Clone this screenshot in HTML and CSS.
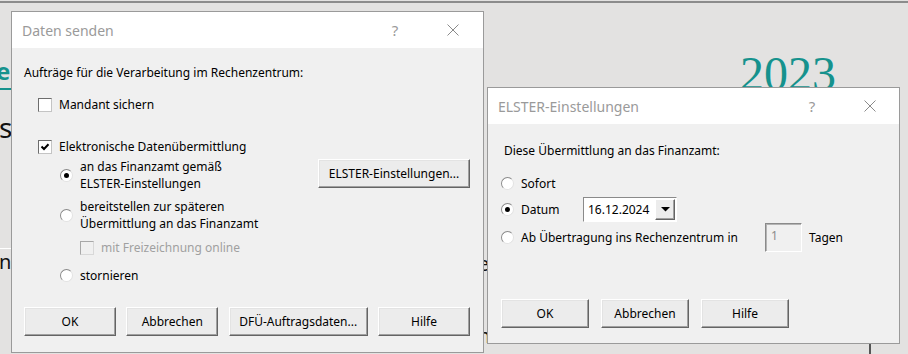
FILE: index.html
```html
<!DOCTYPE html>
<html lang="de">
<head>
<meta charset="utf-8">
<title>Daten senden</title>
<link rel="stylesheet" href="styles.css">
</head>
<body>
<div class="screen">
  <div class="topline"></div>
  <div class="bg-e">e</div>
  <div class="bg-dash"></div>
  <div class="bg-sle">sle</div>
  <div class="bg-rule"></div>
  <div class="bg-n">n</div>
  <div class="bg-year">2023</div>
  <div class="bg-mid-e">e</div>
  <div class="bg-mid-n">n</div>
  <div class="bg-vline"></div>

  <section class="dlg dlg-send">
    <header class="titlebar titlebar-send">
      <span class="title">Daten senden</span>
      <span class="cap-help">?</span>
      <span class="cap-close"><svg width="12" height="12" viewBox="0 0 12 12"><path d="M0.5 0.5L11.5 11.5M11.5 0.5L0.5 11.5" stroke="#8a8a8a" stroke-width="1" fill="none"/></svg></span>
    </header>
    <div class="body-send">
      <p class="heading">Aufträge für die Verarbeitung im Rechenzentrum:</p>
      <label class="check row-mandant"><span class="box"></span>Mandant sichern</label>
      <label class="check row-edu"><span class="box"><svg width="12" height="12" viewBox="0 0 12 12"><path d="M2.5 5.5L5 8L9.5 3.2" stroke="#000" stroke-width="2" fill="none"/></svg></span>Elektronische Datenübermittlung</label>
      <div class="opt-row row-finanzamt">
        <label class="radio"><span class="dot on"></span><span>an das Finanzamt gemäß<br>ELSTER-Einstellungen</span></label>
        <button class="btn btn-elster">ELSTER-Einstellungen...</button>
      </div>
      <label class="radio row-bereit"><span class="dot"></span><span>bereitstellen zur späteren<br>Übermittlung an das Finanzamt</span></label>
      <label class="check disabled row-frei"><span class="box"></span>mit Freizeichnung online</label>
      <label class="radio row-storno"><span class="dot"></span><span>stornieren</span></label>
      <div class="btn-row-send">
        <button class="btn btn-std">OK</button>
        <button class="btn btn-std">Abbrechen</button>
        <button class="btn btn-dfue">DFÜ-Auftragsdaten...</button>
        <button class="btn btn-std">Hilfe</button>
      </div>
    </div>
  </section>

  <section class="dlg dlg-elster">
    <header class="titlebar titlebar-elster">
      <span class="title">ELSTER-Einstellungen</span>
      <span class="cap-help">?</span>
      <span class="cap-close"><svg width="12" height="12" viewBox="0 0 12 12"><path d="M0.5 0.5L11.5 11.5M11.5 0.5L0.5 11.5" stroke="#8a8a8a" stroke-width="1" fill="none"/></svg></span>
    </header>
    <div class="body-elster">
      <p class="heading elster-heading">Diese Übermittlung an das Finanzamt:</p>
      <label class="radio row-sofort"><span class="dot"></span><span>Sofort</span></label>
      <div class="radio row-datum"><span class="dot on"></span><span class="lbl-datum">Datum</span>
        <div class="combo"><span class="combo-val">16.12.2024</span><span class="combo-btn"><svg width="9" height="5" viewBox="0 0 9 5"><path d="M0 0H9L4.5 4.5Z" fill="#000"/></svg></span></div>
      </div>
      <div class="radio row-ab"><span class="dot"></span><span class="lbl-ab">Ab Übertragung ins Rechenzentrum in</span><span class="num">1</span><span class="lbl-tagen">Tagen</span></div>
      <div class="btn-row-elster">
        <button class="btn btn-small">OK</button>
        <button class="btn btn-small">Abbrechen</button>
        <button class="btn btn-small">Hilfe</button>
      </div>
    </div>
  </section>
</div>
</body>
</html>
```
FILE: styles.css
```css
* { box-sizing: border-box; }
html, body { margin: 0; padding: 0; }
body {
  width: 908px; height: 354px; overflow: hidden;
  font-family: "Noto Sans", "Open Sans", sans-serif;
  font-size: 12px; color: #000; background: #e3e2e1;
}
.screen { position: relative; width: 908px; height: 354px; overflow: hidden; background: #e3e2e1; }

/* background canvas fragments */
.topline { position: absolute; left: 0; top: 1px; width: 100%; height: 2px; background: #8c8c8c; }
.bg-e { position: absolute; left: -4px; top: 59px; font-size: 24px; line-height: 1; font-weight: 700; color: #16928d; }
.bg-dash { position: absolute; left: 0; top: 88px; width: 12px; height: 2px; border-top: 2px dashed #16928d; }
.bg-sle { position: absolute; left: -1px; top: 113px; font-size: 28px; line-height: 1; color: #111; }
.bg-rule { position: absolute; left: 0; top: 248px; width: 12px; height: 1px; background: #fff; }
.bg-n { position: absolute; left: -1px; top: 252px; font-size: 20px; line-height: 1; color: #111; }
.bg-year { position: absolute; left: 740px; top: 50px; font-family: "Liberation Serif", serif; font-size: 48px; line-height: 1; color: #16928d; }
.bg-mid-e { position: absolute; left: 478px; top: 254px; font-size: 20px; line-height: 1; color: #111; }
.bg-mid-n { position: absolute; left: 478px; top: 326px; font-size: 20px; line-height: 1; color: #111; }
.bg-vline { position: absolute; left: 869px; top: 340px; width: 2px; height: 14px; background: #555; }

/* windows */
.dlg { position: absolute; display: flex; flex-direction: column; background: #f0f0f0; border: 1px solid #9a9a9a; }
.dlg-send { left: 11px; top: 11px; width: 473px; height: 342px; }
.dlg-elster { left: 487px; top: 87px; width: 413px; height: 257px; }

.titlebar { display: flex; align-items: center; height: 36px; background: #fff; padding-left: 10px; flex: none; }
.titlebar-send { padding-right: 7px; }
.titlebar-elster { padding-right: 6px; }
.title { flex: 1; font-size: 14px; color: #9a9a9a; }
.cap-help { width: 46px; text-align: center; font-size: 15px; color: #9a9a9a; margin-right: 12px; }
.cap-close { width: 46px; display: flex; justify-content: center; }

.heading { margin: 0; height: 17px; line-height: 17px; white-space: nowrap; }

.check { display: flex; align-items: center; height: 17px; line-height: 17px; white-space: nowrap; }
.box {
  width: 14px; height: 14px; flex: none; margin-right: 7px;
  display: flex; align-items: center; justify-content: center;
  background: #fff; border: 1px solid; border-color: #6d6d6d #c4c4c4 #c4c4c4 #6d6d6d;
}
.check.disabled { color: #a0a0a0; }
.check.disabled .box { background: #f0f0f0; border-color: #a8a8a8 #d8d8d8 #d8d8d8 #a8a8a8; }

.radio { display: flex; align-items: center; line-height: 17px; white-space: nowrap; }
.dot {
  position: relative; flex: none; width: 13px; height: 13px; margin-right: 7px;
  border-radius: 50%; background: #fff;
  border: 1px solid; border-color: #8a8a8a #e2e2e2 #e2e2e2 #8a8a8a;
}
.dot.on::after {
  content: ""; position: absolute; left: 3px; top: 3px; width: 5px; height: 5px;
  border-radius: 50%; background: #000;
}

.btn {
  height: 29px; padding: 0; font-family: inherit; font-size: 12px; color: #000;
  background: #ececec; border: 1px solid; border-color: #fff #646464 #646464 #fff;
  box-shadow: inset -1px -1px 0 #a0a0a0, inset 1px 1px 0 #e3e3e3;
}

/* Daten senden body */
.body-send { padding: 16px 13px 0 12px; display: flex; flex-direction: column; }
.row-mandant { margin: 15px 0 0 14px; }
.row-edu { margin: 25px 0 0 14px; }
.opt-row { display: flex; justify-content: space-between; align-items: flex-start; }
.row-finanzamt { margin: 3px 0 0 36px; }
.row-finanzamt .radio { height: 34px; }
.btn-elster { width: 152px; margin-top: 1px; }
.row-bereit { margin: 6px 0 0 36px; height: 34px; }
.row-frei { margin: 7px 0 0 56px; }
.row-storno { margin: 11px 0 0 36px; height: 17px; }
.btn-row-send { display: flex; justify-content: space-between; margin-top: 23px; }
.btn-std { width: 92px; }
.btn-dfue { width: 139px; }

/* ELSTER body */
.body-elster { padding: 18px 12px 0 13px; display: flex; flex-direction: column; }
.elster-heading { margin-left: 3px; }
.row-sofort { margin-top: 16px; height: 17px; }
.row-datum { margin-top: 5px; height: 25px; }
.lbl-datum { width: 62px; }
.combo {
  display: flex; width: 94px; height: 25px; background: #fff;
  border: 1px solid; border-color: #8a8a8a #fff #fff #8a8a8a;
}
.combo-val { flex: 1; padding-left: 4px; line-height: 23px; }
.combo-btn {
  width: 20px; margin: 1px 1px 1px 0; display: flex; align-items: center; justify-content: center;
  background: #ececec; border: 1px solid; border-color: #fff #646464 #646464 #fff;
  box-shadow: inset -1px -1px 0 #a0a0a0;
}
.row-ab { margin-top: 1px; height: 29px; }
.lbl-ab { width: 244px; }
.num {
  width: 37px; height: 29px; padding: 3px 0 0 5px; line-height: 17px;
  background: #f0f0f0; color: #8c8c8c;
  border: 1px solid; border-color: #8a8a8a #fff #fff #8a8a8a;
  box-shadow: inset 1px 1px 0 #b4b4b4;
}
.lbl-tagen { margin-left: 7px; }
.btn-row-elster { display: flex; gap: 12px; margin-top: 47px; }
.btn-small { width: 88px; }
```
